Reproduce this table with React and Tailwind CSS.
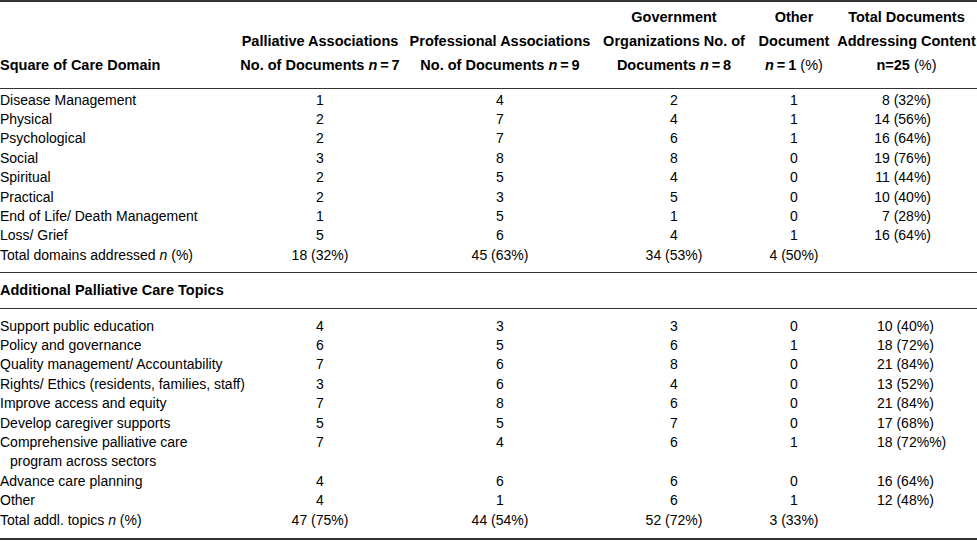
import React from "react";

const cols = "grid grid-cols-[236px_168px_192px_156px_84px_1fr]";

const domains = [
  ["Disease Management", "1", "4", "2", "1", "8 (32%)"],
  ["Physical", "2", "7", "4", "1", "14 (56%)"],
  ["Psychological", "2", "7", "6", "1", "16 (64%)"],
  ["Social", "3", "8", "8", "0", "19 (76%)"],
  ["Spiritual", "2", "5", "4", "0", "11 (44%)"],
  ["Practical", "2", "3", "5", "0", "10 (40%)"],
  ["End of Life/ Death Management", "1", "5", "1", "0", "7 (28%)"],
  ["Loss/ Grief", "5", "6", "4", "1", "16 (64%)"],
];

const topics = [
  ["Support public education", "4", "3", "3", "0", "10 (40%)"],
  ["Policy and governance", "6", "5", "6", "1", "18 (72%)"],
  ["Quality management/ Accountability", "7", "6", "8", "0", "21 (84%)"],
  ["Rights/ Ethics (residents, families, staff)", "3", "6", "4", "0", "13 (52%)"],
  ["Improve access and equity", "7", "8", "6", "0", "21 (84%)"],
  ["Develop caregiver supports", "5", "5", "7", "0", "17 (68%)"],
  ["Comprehensive palliative care", "7", "4", "6", "1", "18 (72%%)", "program across sectors"],
  ["Advance care planning", "4", "6", "6", "0", "16 (64%)"],
  ["Other", "4", "1", "6", "1", "12 (48%)"],
];

function HeadCell({ lines }) {
  return (
    <div className="flex flex-col items-center justify-end">
      {lines.map((line, i) => (
        <div key={i} className="whitespace-nowrap">
          {line}
        </div>
      ))}
    </div>
  );
}

function Row({ row, totalAlign }) {
  const [label, a, b, c, d, total, more] = row;
  return (
    <div className={`${cols} leading-[19.4px]`}>
      <div className="whitespace-nowrap">
        <div>{label}</div>
        {more && <div className="pl-[10px]">{more}</div>}
      </div>
      <div className="text-center">{a}</div>
      <div className="text-center">{b}</div>
      <div className="text-center">{c}</div>
      <div className="text-center">{d}</div>
      <div className={totalAlign}>{total}</div>
    </div>
  );
}

function TotalRow({ label, values }) {
  return (
    <div className={`${cols} leading-[19.4px]`}>
      <div className="whitespace-nowrap">{label}</div>
      {values.map((v, i) => (
        <div key={i} className="text-center whitespace-nowrap">
          {v}
        </div>
      ))}
      <div />
    </div>
  );
}

export default function App() {
  return (
    <div className="w-[977px] h-[541px] bg-white text-black font-['Liberation_Sans',Arial,sans-serif] text-[14px] overflow-hidden">
      <div className="border-t-2 border-[#333]" />

      {/* header */}
      <div className={`${cols} items-end pt-[3px] pb-[11px] border-b-[1.5px] border-[#333] font-bold text-[14.5px] leading-[24px]`}>
        <div className="whitespace-nowrap">Square of Care Domain</div>
        <HeadCell
          lines={[
            "Palliative Associations",
            <>
              No. of Documents <i>n</i>&thinsp;=&thinsp;7
            </>,
          ]}
        />
        <HeadCell
          lines={[
            "Professional Associations",
            <>
              No. of Documents <i>n</i>&thinsp;=&thinsp;9
            </>,
          ]}
        />
        <HeadCell
          lines={[
            "Government",
            "Organizations No. of",
            <>
              Documents <i>n</i>&thinsp;=&thinsp;8
            </>,
          ]}
        />
        <HeadCell
          lines={[
            "Other",
            "Document",
            <>
              <i>n</i>&thinsp;=&thinsp;1 <span className="font-normal">(%)</span>
            </>,
          ]}
        />
        <HeadCell
          lines={[
            "Total Documents",
            "Addressing Content",
            <>
              n=25 <span className="font-normal">(%)</span>
            </>,
          ]}
        />
      </div>

      {/* square of care domains */}
      <div className="pt-[1.5px] pb-[7px] border-b-[1.5px] border-[#333]">
        {domains.map((r) => (
          <Row key={r[0]} row={r} totalAlign="text-right pr-[46px]" />
        ))}
        <TotalRow
          label={
            <>
              Total domains addressed <i>n</i> (%)
            </>
          }
          values={["18 (32%)", "45 (63%)", "34 (53%)", "4 (50%)"]}
        />
      </div>

      <div className="pt-[8px] pb-[7px] border-b-[1.5px] border-[#333] font-bold text-[14.5px] leading-[19.4px]">
        Additional Palliative Care Topics
      </div>

      {/* additional topics */}
      <div className="pt-[8px] pb-[8px] border-b-2 border-[#333]">
        {topics.map((r) => (
          <Row key={r[0]} row={r} totalAlign="pl-[41px]" />
        ))}
        <TotalRow
          label={
            <>
              Total addl. topics <i>n</i> (%)
            </>
          }
          values={["47 (75%)", "44 (54%)", "52 (72%)", "3 (33%)"]}
        />
      </div>
    </div>
  );
}
